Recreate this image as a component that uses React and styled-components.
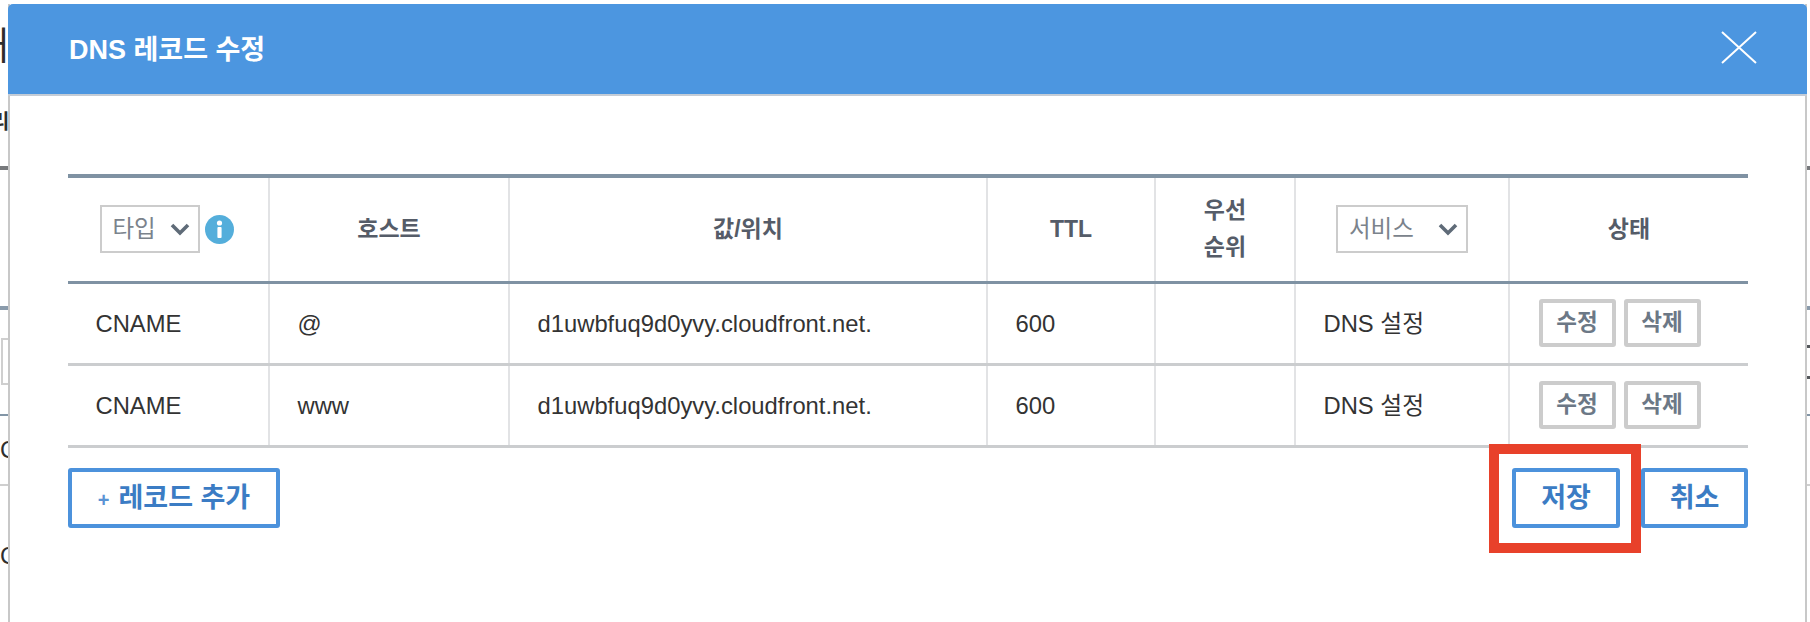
import React from 'react';
import styled, { createGlobalStyle } from 'styled-components';

const GlobalStyle = createGlobalStyle`
  html, body {
    margin: 0;
    padding: 0;
    background: #fff;
  }
  body {
    font-family: 'Liberation Sans', 'Noto Sans CJK KR', sans-serif;
    color: #333;
  }
`;

const Page = styled.div`
  position: relative;
  width: 1810px;
  height: 622px;
  overflow: hidden;
  background: #fff;
  padding: 4px 3px 0 8px;
  box-sizing: border-box;
`;

/* page behind the modal, only a few px of it show at the edges */
const BackLine = styled.div`
  position: absolute;
  left: 0;
  right: 0;
  top: ${(p) => p.$top}px;
  height: ${(p) => p.$h}px;
  background: ${(p) => p.$color};
`;

const BackText = styled.span`
  position: absolute;
  left: ${(p) => p.$left}px;
  top: ${(p) => p.$top}px;
  font-size: ${(p) => p.$size}px;
  font-weight: ${(p) => p.$weight || 400};
  line-height: 1;
  color: #2e2e2e;
`;

const BackInput = styled.div`
  position: absolute;
  left: 1px;
  top: 338px;
  width: 40px;
  height: 47px;
  box-sizing: border-box;
  border: 2px solid #cfcfcf;
`;

const BackDash = styled.div`
  position: absolute;
  right: 0;
  top: ${(p) => p.$top}px;
  width: 3px;
  height: 3px;
  background: #55585c;
`;

const Modal = styled.div`
  height: 618px;
  background: #fff;
  border-left: 2px solid #c8c8c8;
  border-right: 2px solid #c8c8c8;
  box-sizing: border-box;
  position: relative;
`;

const Header = styled.div`
  margin: 0 -2px;
  height: 92px;
  box-sizing: border-box;
  background: #4c96e0;
  border-bottom: 2px solid #c4ccd6;
  border-radius: 5px 5px 0 0;
  display: flex;
  align-items: center;
  justify-content: space-between;
  padding: 0 50px 4px 61px;
`;

const Title = styled.h2`
  margin: 0;
  font-size: 27px;
  font-weight: 700;
  color: #fff;
`;

const CloseButton = styled.button`
  border: 0;
  padding: 0;
  background: none;
  display: flex;
  svg {
    display: block;
  }
`;

const Body = styled.div`
  padding: 78px 57px 0 58px;
`;

const Table = styled.table`
  width: 100%;
  border-collapse: collapse;
  table-layout: fixed;
  border-top: 4px solid #7f92a3;
`;

const HeadRow = styled.tr`
  height: 106px;
  border-bottom: 3px solid #7f92a3;
`;

const Row = styled.tr`
  height: 82px;
  border-bottom: 3px solid #cbcdcf;
`;

const Th = styled.th`
  padding: 0;
  font-size: 23px;
  font-weight: 700;
  line-height: 37px;
  color: #555c68;
  text-align: center;
  border-left: 2px solid #e2e3e5;
  &:first-child {
    border-left: 0;
  }
`;

const Td = styled.td`
  padding: 2px 0 0 27.5px;
  font-size: 23.8px;
  line-height: 30px;
  color: #333;
  border-left: 2px solid #e2e3e5;
  &:first-child {
    border-left: 0;
  }
`;

const SelectGroup = styled.div`
  display: flex;
  align-items: center;
  justify-content: center;
  gap: 5px;
  padding-right: ${(p) => p.$shift || 0}px;
`;

const Select = styled.div`
  width: ${(p) => p.$width}px;
  height: 48px;
  box-sizing: border-box;
  border: 2px solid #cccccc;
  display: flex;
  align-items: center;
  justify-content: space-between;
  padding: 0 8px 0 11px;
  font-size: 23.5px;
  font-weight: 400;
  color: #7b838c;
`;

const Actions = styled.div`
  display: flex;
  gap: 8px;
  padding-left: 1px;
  margin-top: -2px;
`;

const SmallButton = styled.button`
  width: 77px;
  height: 48px;
  box-sizing: border-box;
  border: 4px solid #cccccc;
  border-radius: 3px;
  background: #fff;
  padding: 0 0 6px;
  font-family: inherit;
  font-size: 22.5px;
  font-weight: 700;
  color: #6c7886;
`;

const Footer = styled.div`
  display: flex;
  justify-content: space-between;
  margin-top: 20px;
`;

const ButtonGroup = styled.div`
  position: relative;
  display: flex;
  gap: 21px;
`;

const BlueButton = styled.button`
  width: ${(p) => p.$width}px;
  height: 60px;
  box-sizing: border-box;
  border: 4px solid #4c92dc;
  border-radius: 3px;
  background: #fff;
  padding: 0 0 5px;
  font-family: inherit;
  font-size: 27px;
  font-weight: 700;
  color: #3b7cc4;
`;

const Plus = styled.span`
  font-size: 20px;
  margin-right: 9px;
  color: #5a93d4;
`;

const Highlight = styled.div`
  position: absolute;
  left: -23px;
  top: -24px;
  width: 152px;
  height: 109px;
  box-sizing: border-box;
  border: 10px solid #e8412a;
  pointer-events: none;
`;

function Chevron() {
  return (
    <svg width="20" height="14" viewBox="0 0 20 14" fill="none">
      <path d="M2 3l8 8 8-8" stroke="#5f6b78" strokeWidth="3.6" />
    </svg>
  );
}

function InfoIcon() {
  return (
    <svg width="29" height="29" viewBox="0 0 29 29">
      <circle cx="14.5" cy="14.5" r="14.5" fill="#54aedb" />
      <circle cx="14.5" cy="8" r="2.6" fill="#fff" />
      <rect x="12.4" y="12" width="4.2" height="11" rx="1" fill="#fff" />
    </svg>
  );
}

const records = [
  { host: '@' },
  { host: 'www' },
];

export default function App() {
  return (
    <>
      <GlobalStyle />
      <Page>
        <BackLine $top={166} $h={4} $color="#77797c" />
        <BackLine $top={306} $h={4} $color="#8a9bab" />
        <BackLine $top={414} $h={2} $color="#8295a6" />
        <BackLine $top={484} $h={2} $color="#cfcfcf" />
        <BackText $left={-26} $top={27} $size={38}>내</BackText>
        <BackText $left={-9} $top={112} $size={20} $weight={700}>리</BackText>
        <BackInput />
        <BackText $left={0} $top={438} $size={24}>C</BackText>
        <BackText $left={0} $top={544} $size={24}>C</BackText>
        <BackDash $top={345} />
        <BackDash $top={376} />
        <Modal>
          <Header>
            <Title>DNS 레코드 수정</Title>
            <CloseButton>
              <svg width="36" height="33" viewBox="0 0 36 33">
                <path d="M1 1l34 31M35 1L1 32" stroke="#fff" strokeWidth="2" fill="none" />
              </svg>
            </CloseButton>
          </Header>
          <Body>
            <Table>
              <colgroup>
                <col style={{ width: 201 }} />
                <col style={{ width: 240 }} />
                <col style={{ width: 478 }} />
                <col style={{ width: 168 }} />
                <col style={{ width: 140 }} />
                <col style={{ width: 214 }} />
                <col />
              </colgroup>
              <thead>
                <HeadRow>
                  <Th>
                    <SelectGroup $shift={3}>
                      <Select $width={100}>타입<Chevron /></Select>
                      <InfoIcon />
                    </SelectGroup>
                  </Th>
                  <Th>호스트</Th>
                  <Th>값/위치</Th>
                  <Th>TTL</Th>
                  <Th>우선<br />순위</Th>
                  <Th>
                    <SelectGroup>
                      <Select $width={132}>서비스<Chevron /></Select>
                    </SelectGroup>
                  </Th>
                  <Th>상태</Th>
                </HeadRow>
              </thead>
              <tbody>
                {records.map((r) => (
                  <Row key={r.host}>
                    <Td>CNAME</Td>
                    <Td>{r.host}</Td>
                    <Td>d1uwbfuq9d0yvy.cloudfront.net.</Td>
                    <Td>600</Td>
                    <Td />
                    <Td>DNS 설정</Td>
                    <Td>
                      <Actions>
                        <SmallButton>수정</SmallButton>
                        <SmallButton>삭제</SmallButton>
                      </Actions>
                    </Td>
                  </Row>
                ))}
              </tbody>
            </Table>
            <Footer>
              <BlueButton $width={212}><Plus>+</Plus>레코드 추가</BlueButton>
              <ButtonGroup>
                <BlueButton $width={108}>저장</BlueButton>
                <BlueButton $width={107}>취소</BlueButton>
                <Highlight />
              </ButtonGroup>
            </Footer>
          </Body>
        </Modal>
      </Page>
    </>
  );
}
